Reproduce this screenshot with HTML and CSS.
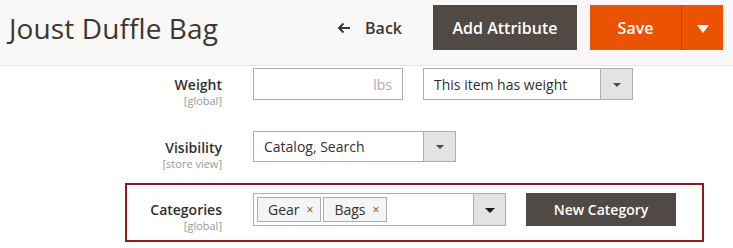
FILE: index.html
```html
<!DOCTYPE html>
<html lang="en">
<head>
  <meta charset="UTF-8" />
  <meta name="viewport" content="width=device-width, initial-scale=1.0"/>
  <title>Joust Duffle Bag</title>
  <link rel="stylesheet" href="styles.css">
</head>
<body>

  <div class="page-header">
    <h1 class="page-title">Joust Duffle Bag</h1>
    <div class="page-actions">
      <a class="back-link" href="#">
        <svg class="back-arrow" width="14" height="12" viewBox="0 0 14 12">
          <path d="M13 6H2M6.5 1.5L2 6l4.5 4.5" fill="none" stroke="#41362f" stroke-width="2"/>
        </svg>
        Back
      </a>
      <button class="btn btn-dark btn-large">Add Attribute</button>
      <div class="split-btn">
        <button class="btn btn-primary btn-large save-main">Save</button>
        <button class="btn btn-primary btn-large save-toggle"><span class="caret-white"></span></button>
      </div>
    </div>
  </div>

  <div class="content">
    <div class="field">
      <div class="field-label">
        <span class="label-text">Weight</span>
        <span class="scope">[global]</span>
      </div>
      <div class="field-control">
        <div class="input input-weight"><span class="unit">lbs</span></div>
        <div class="select select-weight">
          <span class="select-value">This item has weight</span>
          <span class="select-arrow"><span class="caret"></span></span>
        </div>
      </div>
    </div>

    <div class="field">
      <div class="field-label">
        <span class="label-text">Visibility</span>
        <span class="scope">[store view]</span>
      </div>
      <div class="field-control">
        <div class="select select-visibility">
          <span class="select-value">Catalog, Search</span>
          <span class="select-arrow"><span class="caret"></span></span>
        </div>
      </div>
    </div>

    <div class="field field-highlight">
      <div class="field-label">
        <span class="label-text">Categories</span>
        <span class="scope">[global]</span>
      </div>
      <div class="field-control">
        <div class="select select-categories">
          <span class="tags">
            <span class="tag">Gear<span class="tag-remove">&times;</span></span>
            <span class="tag">Bags<span class="tag-remove">&times;</span></span>
          </span>
          <span class="select-arrow"><span class="caret caret-black"></span></span>
        </div>
        <button class="btn btn-dark btn-new-category">New Category</button>
      </div>
    </div>
  </div>

</body>
</html>
```

FILE: styles.css
```css
body {
  font-family: "Open Sans", Arial, sans-serif;
  color: #303030;
  background: #fff;
  margin: 0;
}
.page-header {
  display: flex;
  justify-content: space-between;
  align-items: center;
  height: 45px;
  padding: 5px 10px 15px 9px;
  background: #f8f8f8;
  border-bottom: 1px solid #e3e3e3;
}
.page-title {
  margin: 0;
  font-size: 28px;
  font-weight: 400;
  color: #41362f;
  letter-spacing: 0.1px;
}
.page-actions {
  display: flex;
  align-items: center;
}
.back-link {
  display: flex;
  align-items: center;
  gap: 14px;
  color: #41362f;
  font-size: 16px;
  font-weight: 600;
  text-decoration: none;
  margin-right: 31px;
}
.btn {
  font-family: "Open Sans", Arial, sans-serif;
  border: none;
  color: #fff;
  font-weight: 600;
  cursor: pointer;
  padding: 0;
}
.btn-large {
  height: 45px;
  font-size: 16px;
}
.btn-dark {
  background: #514943;
}
.btn-primary {
  background: #eb5202;
}
.btn-large.btn-dark {
  width: 144px;
  margin-right: 13px;
}
.split-btn {
  display: flex;
}
.save-main {
  width: 92px;
  border-right: 1px solid #c64403;
}
.save-toggle {
  width: 41px;
  display: flex;
  align-items: center;
  justify-content: center;
}
.caret-white {
  width: 0;
  height: 0;
  border-left: 6px solid transparent;
  border-right: 6px solid transparent;
  border-top: 8px solid #fff;
  margin-top: 2px;
}
.content {
  padding-top: 2px;
}
.field {
  display: flex;
  align-items: flex-start;
  height: 38px;
  margin-bottom: 25px;
}
.field-label {
  width: 222px;
  padding-top: 8px;
  text-align: right;
  flex-shrink: 0;
}
.label-text {
  display: block;
  font-size: 14px;
  line-height: 17px;
  font-weight: 600;
  color: #303030;
}
.scope {
  display: block;
  font-size: 11px;
  line-height: 13px;
  margin-top: 1px;
  color: #999;
}
.field-control {
  display: flex;
  align-items: center;
  margin-left: 31px;
}
.input, .select {
  box-sizing: border-box;
  border: 1px solid #adadad;
  background: #fff;
  font-size: 14px;
  display: flex;
  align-items: center;
}
.input-weight {
  width: 150px;
  height: 32px;
  justify-content: flex-end;
  padding-right: 10px;
}
.unit {
  color: #adadad;
}
.select-value {
  flex: 1;
  padding-left: 10px;
}
.select-arrow {
  box-sizing: border-box;
  align-self: stretch;
  width: 32px;
  background: #e3e3e3;
  border-left: 1px solid #adadad;
  display: flex;
  align-items: center;
  justify-content: center;
}
.caret {
  width: 0;
  height: 0;
  border-left: 4px solid transparent;
  border-right: 4px solid transparent;
  border-top: 4px solid #514943;
  margin-top: 1px;
}
.caret-black {
  border-left-width: 5px;
  border-right-width: 5px;
  border-top: 5px solid #1a1a1a;
}
.select-weight {
  width: 210px;
  height: 32px;
  margin-left: 20px;
}
.select-visibility {
  width: 203px;
  height: 31px;
}
.field-highlight {
  box-sizing: border-box;
  margin-left: 125px;
  margin-bottom: 0;
  width: 579px;
  height: 59px;
  border: 2px solid #8c1b1f;
  padding-top: 8px;
  margin-top: -11px;
}
.field-highlight .field-label {
  width: 95px;
}
.select-categories {
  width: 253px;
  height: 33px;
}
.tags {
  flex: 1;
  display: flex;
  gap: 2px;
  padding-left: 3px;
}
.tag {
  box-sizing: border-box;
  height: 25px;
  border: 1px solid #adadad;
  background: #f5f5f5;
  display: flex;
  align-items: center;
  padding: 0 7px 0 10px;
  color: #303030;
}
.tag-remove {
  font-size: 12px;
  color: #514943;
  margin-left: 7px;
}
.btn-new-category {
  width: 150px;
  height: 33px;
  margin-left: 20px;
  font-size: 14px;
}
```
